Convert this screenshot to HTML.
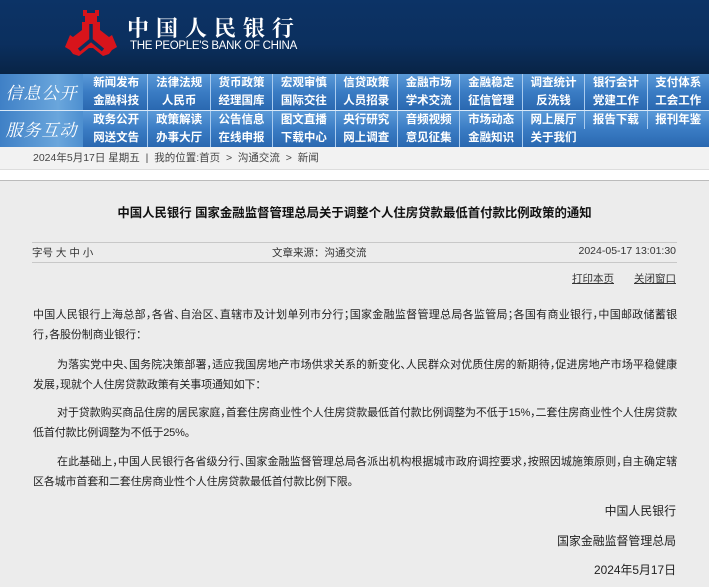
<!DOCTYPE html>
<html><head><meta charset="utf-8"><style>
*{margin:0;padding:0;box-sizing:border-box}
body{width:709px;height:587px;overflow:hidden;background:#ececec;font-family:"Liberation Sans","Noto Sans CJK SC",sans-serif;color:#222;position:relative}
.hd{position:absolute;left:0;top:0;width:709px;height:74px;background:linear-gradient(180deg,#0c3366 0%,#0b2f5e 60%,#082446 100%)}
.cn{position:absolute;left:127px;top:12px;color:#fff;font-family:"Noto Serif CJK SC",serif;font-size:22px;font-weight:bold;letter-spacing:7px;white-space:nowrap}
.en{position:absolute;left:130px;top:40px;color:#fff;font-size:11.5px;white-space:nowrap;letter-spacing:-0.3px}
.nav{position:absolute;left:0;top:74px;width:709px;height:73px;background:#2f6fb8}
.grp{position:absolute;left:0;width:709px;height:36px;background:linear-gradient(180deg,#5b9ad8 0%,#3a7cc4 50%,#2a68b0 100%)}
.lbl{position:absolute;left:0;top:0;width:83px;height:36px;background:linear-gradient(90deg,#3f80c6,#6aa6dc 70%,#4d8fd0);color:#fff;font-style:italic;font-family:"Noto Serif CJK SC",serif;font-size:17px;line-height:36px;text-align:center;letter-spacing:1px}
.it{position:absolute;width:62.4px;height:18px;color:#fff;font-size:11.5px;font-weight:bold;text-align:center;line-height:18px;border-left:1px solid #a9cbef;white-space:nowrap}
.bc{position:absolute;left:0;top:147px;width:709px;height:23px;background:#f2f2f2;font-size:10.5px;color:#444;line-height:23px;padding-left:33px;border-bottom:1px solid #ddd}
.wh{position:absolute;left:0;top:170px;width:709px;height:11px;background:#fff;border-bottom:1px solid #bbb}
.title{position:absolute;left:0;width:709px;top:203px;text-align:center;font-size:12.4px;font-weight:bold;color:#111}
.ln{position:absolute;left:32px;width:645px;height:1px;background:#c8c8c8}
.meta{position:absolute;top:245px;font-size:10.5px;color:#333}
.p{position:absolute;left:33px;width:644px;font-size:11px;letter-spacing:-0.15px;line-height:20px;color:#222;font-feature-settings:"halt"}
.p div{white-space:nowrap}
.p .j{text-align:justify;text-align-last:justify;white-space:normal;height:20px;overflow:hidden}
.p .i{padding-left:24px}
.r{position:absolute;right:33px;font-size:11.9px;color:#222}
a{color:#333;text-decoration:underline}
</style></head><body>
<div class="hd">
<svg style="position:absolute;left:65px;top:10px" width="52" height="46" viewBox="0 0 52 46">
<polygon fill="#d8141b" points="18,0 22,0 22,3 30,3 30,0 34,0 34,6 32,6 32,12 35,12 35,20 44,27 47,25 52,37 47,40 44,44 38,46 28,38 24,38 14,46 8,44 5,40 0,37 5,25 8,27 17,20 17,12 20,12 20,6 18,6"/>
<path d="M26 30 L26 14 M26 30 L14 40 M26 30 L38 40" stroke="#0b2f5e" stroke-width="3.5" fill="none"/>
</svg>
<div class="cn">中国人民银行</div>
<div class="en">THE PEOPLE'S BANK OF CHINA</div>
</div>
<div class="nav">
<div class="grp" style="top:0"><div class="lbl">信息公开</div></div>
<div class="grp" style="top:37px;height:36px"><div class="lbl">服务互动</div></div>
<div style="position:absolute;left:0;top:36px;width:709px;height:1px;background:#dbe9f7"></div>
<div id="items"></div>
</div>
<script>
var rows=[["新闻发布","法律法规","货币政策","宏观审慎","信贷政策","金融市场","金融稳定","调查统计","银行会计","支付体系"],["金融科技","人民币","经理国库","国际交往","人员招录","学术交流","征信管理","反洗钱","党建工作","工会工作"],["政务公开","政策解读","公告信息","图文直播","央行研究","音频视频","市场动态","网上展厅","报告下载","报刊年鉴"],["网送文告","办事大厅","在线申报","下载中心","网上调查","意见征集","金融知识","关于我们"]];
var tops=[0,18,37,55],h="";
rows.forEach(function(r,i){r.forEach(function(t,j){h+='<div class="it" style="left:'+(85+j*62.4)+'px;top:'+tops[i]+'px'+(j==0?';border-left:none':'')+'">'+t+'</div>';});});
document.getElementById("items").outerHTML=h;
</script>
<div class="bc">2024年5月17日 星期五 &nbsp;|&nbsp; 我的位置:首页 &nbsp;&gt;&nbsp; 沟通交流 &nbsp;&gt;&nbsp; 新闻</div>
<div class="wh"></div>
<div class="title">中国人民银行 国家金融监督管理总局关于调整个人住房贷款最低首付款比例政策的通知</div>
<div class="ln" style="top:242px"></div>
<div class="meta" style="left:32px">字号 大 中 小</div>
<div class="meta" style="left:272px">文章来源：沟通交流</div>
<div class="meta" style="right:33px">2024-05-17 13:01:30</div>
<div class="ln" style="top:262px"></div>
<div class="meta" style="top:271px;right:33px"><a style="margin-right:20px">打印本页</a><a>关闭窗口</a></div>
<div class="p" style="top:305px"><div class="j">中国人民银行上海总部，各省、自治区、直辖市及计划单列市分行；国家金融监督管理总局各监管局；各国有商业银行，中国邮政储蓄银</div><div>行，各股份制商业银行：</div></div>
<div class="p" style="top:355px"><div class="j i">为落实党中央、国务院决策部署，适应我国房地产市场供求关系的新变化、人民群众对优质住房的新期待，促进房地产市场平稳健康</div><div>发展，现就个人住房贷款政策有关事项通知如下：</div></div>
<div class="p" style="top:403px"><div class="j i">对于贷款购买商品住房的居民家庭，首套住房商业性个人住房贷款最低首付款比例调整为不低于15%，二套住房商业性个人住房贷款最</div><div>低首付款比例调整为不低于25%。</div></div>
<div class="p" style="top:452px"><div class="j i">在此基础上，中国人民银行各省级分行、国家金融监督管理总局各派出机构根据城市政府调控要求，按照因城施策原则，自主确定辖</div><div>区各城市首套和二套住房商业性个人住房贷款最低首付款比例下限。</div></div>
<div class="r" style="top:502px">中国人民银行</div>
<div class="r" style="top:532px">国家金融监督管理总局</div>
<div class="r" style="top:561px">2024年5月17日</div>
</body></html>
